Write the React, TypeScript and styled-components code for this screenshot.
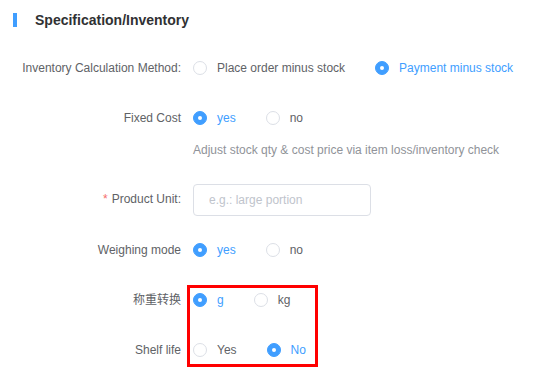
import React, { useState } from 'react';
import styled, { createGlobalStyle } from 'styled-components';

const GlobalStyle = createGlobalStyle`
    body {
        margin: 0;
        background: #fff;
        font-family: 'Liberation Sans', Arial, 'Noto Sans CJK SC', sans-serif;
        font-size: 12px;
        color: #606266;
    }
`;

type Option = { value: string; label: string };

type RadioGroupProps = {
    options: Option[];
    value: string;
    onChange: (v: string) => void;
};

const RadioGroup = ({ options, value, onChange }: RadioGroupProps) => (
    <StGroup>
        {options.map((o) => (
            <StRadio key={o.value} onClick={() => onChange(o.value)}>
                <StCircle $checked={o.value === value} />
                <StRadioText $checked={o.value === value}>{o.label}</StRadioText>
            </StRadio>
        ))}
    </StGroup>
);

const App = () => {
    const [method, setMethod] = useState('pay');
    const [fixed, setFixed] = useState('yes');
    const [weigh, setWeigh] = useState('yes');
    const [unit, setUnit] = useState('g');
    const [shelf, setShelf] = useState('no');

    return (
        <>
            <GlobalStyle />
            <StPage>
                <StHeader>
                    <StBar />
                    <StTitle>Specification/Inventory</StTitle>
                </StHeader>
                <StForm>
                    <StItem>
                        <StLabel>Inventory Calculation Method:</StLabel>
                        <StContent>
                            <RadioGroup
                                value={method}
                                onChange={setMethod}
                                options={[
                                    { value: 'order', label: 'Place order minus stock' },
                                    { value: 'pay', label: 'Payment minus stock' },
                                ]}
                            />
                        </StContent>
                    </StItem>
                    <StItem $gap={17}>
                        <StLabel>Fixed Cost</StLabel>
                        <StContent>
                            <RadioGroup
                                value={fixed}
                                onChange={setFixed}
                                options={[
                                    { value: 'yes', label: 'yes' },
                                    { value: 'no', label: 'no' },
                                ]}
                            />
                            <StHint>Adjust stock qty &amp; cost price via item loss/inventory check</StHint>
                        </StContent>
                    </StItem>
                    <StItem>
                        <StLabel>
                            <StRequired>*</StRequired>Product Unit:
                        </StLabel>
                        <StContent>
                            <StInput placeholder="e.g.: large portion" />
                        </StContent>
                    </StItem>
                    <StItem>
                        <StLabel>Weighing mode</StLabel>
                        <StContent>
                            <RadioGroup
                                value={weigh}
                                onChange={setWeigh}
                                options={[
                                    { value: 'yes', label: 'yes' },
                                    { value: 'no', label: 'no' },
                                ]}
                            />
                        </StContent>
                    </StItem>
                    <StHighlight>
                        <StItem>
                            <StLabel>称重转换</StLabel>
                            <StContent>
                                <RadioGroup
                                    value={unit}
                                    onChange={setUnit}
                                    options={[
                                        { value: 'g', label: 'g' },
                                        { value: 'kg', label: 'kg' },
                                    ]}
                                />
                            </StContent>
                        </StItem>
                        <StItem $gap={0}>
                            <StLabel>Shelf life</StLabel>
                            <StContent>
                                <RadioGroup
                                    value={shelf}
                                    onChange={setShelf}
                                    options={[
                                        { value: 'yes', label: 'Yes' },
                                        { value: 'no', label: 'No' },
                                    ]}
                                />
                            </StContent>
                        </StItem>
                    </StHighlight>
                </StForm>
            </StPage>
        </>
    );
};

export default App;

const StPage = styled.div`
    width: 552px;
    height: 377px;
    overflow: hidden;
`;
const StHeader = styled.div`
    display: flex;
    align-items: center;
    height: 14px;
    padding: 13px 0 0 13px;
`;
const StBar = styled.div`
    width: 4px;
    height: 14px;
    background: #409eff;
`;
const StTitle = styled.h3`
    margin: 0 0 0 18px;
    font-size: 14px;
    font-weight: bold;
    color: #303133;
    line-height: 14px;
`;
const StForm = styled.div`
    padding-top: 25px;
`;
const StItem = styled.div<{ $gap?: number }>`
    display: flex;
    margin-bottom: ${({ $gap }) => ($gap ?? 18)}px;
`;
const StLabel = styled.label`
    width: 181px;
    flex-shrink: 0;
    text-align: right;
    line-height: 32px;
    color: #606266;
    white-space: nowrap;
`;
const StRequired = styled.span`
    color: #f56c6c;
    margin-right: 4px;
`;
const StContent = styled.div`
    margin-left: 12px;
    line-height: 32px;
`;
const StGroup = styled.div`
    display: flex;
    align-items: center;
    height: 32px;
`;
const StRadio = styled.span`
    display: inline-flex;
    align-items: center;
    margin-right: 30px;
    cursor: pointer;
`;
const StCircle = styled.span<{ $checked: boolean }>`
    position: relative;
    width: 14px;
    height: 14px;
    box-sizing: border-box;
    border-radius: 50%;
    border: 1px solid ${({ $checked }) => ($checked ? '#409eff' : '#dcdfe6')};
    background: ${({ $checked }) => ($checked ? '#409eff' : '#fff')};
    &::after {
        content: '';
        display: ${({ $checked }) => ($checked ? 'block' : 'none')};
        position: absolute;
        left: 50%;
        top: 50%;
        width: 4px;
        height: 4px;
        border-radius: 50%;
        background: #fff;
        transform: translate(-50%, -50%);
    }
`;
const StRadioText = styled.span<{ $checked: boolean }>`
    padding-left: 10px;
    color: ${({ $checked }) => ($checked ? '#409eff' : '#606266')};
    line-height: 1;
`;
const StHint = styled.div`
    color: #909399;
    line-height: 32px;
`;
const StInput = styled.input`
    width: 178px;
    height: 32px;
    box-sizing: border-box;
    border: 1px solid #dcdfe6;
    border-radius: 4px;
    padding: 0 15px;
    font-family: inherit;
    font-size: 12px;
    color: #606266;
    outline: none;
    vertical-align: middle;
    &::placeholder {
        color: #c0c4cc;
    }
`;
const StHighlight = styled.div`
    position: relative;
    &::after {
        content: '';
        position: absolute;
        left: 187px;
        top: 1px;
        width: 131px;
        height: 82px;
        box-sizing: border-box;
        border: 3px solid #ff0000;
        pointer-events: none;
    }
`;
